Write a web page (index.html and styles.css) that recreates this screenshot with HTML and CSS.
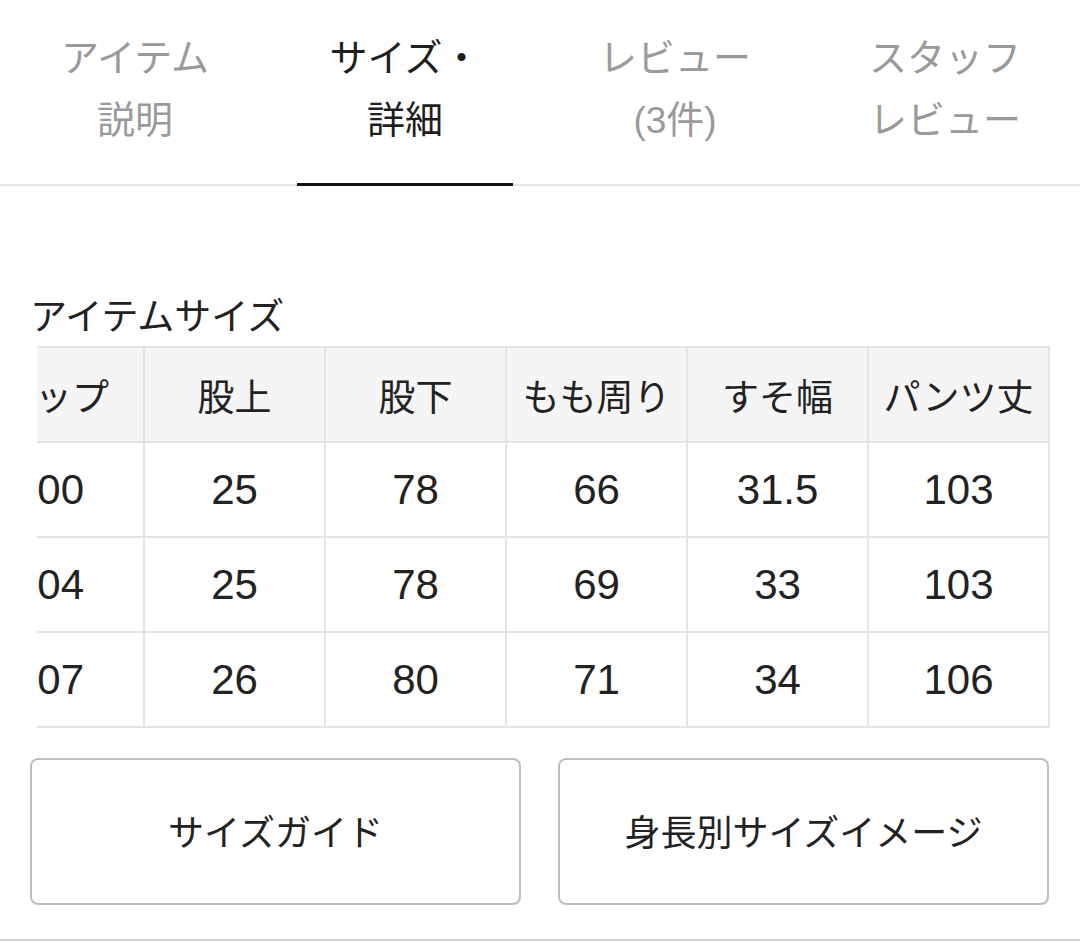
FILE: index.html
```html
<!DOCTYPE html>
<html lang="ja">
<head>
<meta charset="utf-8">
<title>アイテムサイズ</title>
<link rel="stylesheet" href="styles.css">
</head>
<body>
<nav class="tabs">
  <div class="tab">アイテム<br>説明</div>
  <div class="tab active">サイズ・<br>詳細</div>
  <div class="tab">レビュー<br><span class="num">(3</span>件<span class="num">)</span></div>
  <div class="tab">スタッフ<br>レビュー</div>
</nav>
<section class="content">
  <h2 class="heading">アイテムサイズ</h2>
  <div class="table-wrap">
    <table class="size-table">
      <thead>
        <tr><th>ヒップ</th><th>股上</th><th>股下</th><th>もも周り</th><th>すそ幅</th><th>パンツ丈</th></tr>
      </thead>
      <tbody>
        <tr><td>100</td><td>25</td><td>78</td><td>66</td><td>31.5</td><td>103</td></tr>
        <tr><td>104</td><td>25</td><td>78</td><td>69</td><td>33</td><td>103</td></tr>
        <tr><td>107</td><td>26</td><td>80</td><td>71</td><td>34</td><td>106</td></tr>
      </tbody>
    </table>
  </div>
  <div class="buttons">
    <button class="btn">サイズガイド</button>
    <button class="btn">身長別サイズイメージ</button>
  </div>
</section>
<div class="bottom-line"></div>
</body>
</html>
```

FILE: styles.css
```css
html, body {
  margin: 0;
  padding: 0;
  background: #fff;
}
body {
  width: 1080px;
  height: 943px;
  overflow: hidden;
  font-family: "Noto Sans CJK JP", "Noto Sans", sans-serif;
  color: #222;
}
.tabs {
  display: flex;
  border-bottom: 2px solid #e6e6e6;
  height: 186px;
  box-sizing: border-box;
}
.tab {
  flex: 1 1 0;
  position: relative;
  text-align: center;
  font-size: 38px;
  line-height: 62px;
  padding-top: 24px;
  color: #9a9a9a;
}
.tab .num {
  font-family: "Liberation Sans", "Noto Sans CJK JP", sans-serif;
  font-size: 37px;
}
.tab.active {
  color: #1e1e1e;
}
.tab.active::after {
  content: "";
  position: absolute;
  left: 10%;
  right: 10%;
  bottom: -2px;
  height: 3px;
  background: #111;
}
.content {
  padding: 0 30px;
}
.heading {
  margin: 101px 0 5px 0;
  font-size: 37px;
  font-weight: normal;
  line-height: 54px;
  color: #222;
}
.table-wrap {
  overflow: hidden;
  margin-left: 7px;
  width: 1014px;
}
.size-table {
  margin-left: -75px;
  border-collapse: collapse;
  table-layout: fixed;
}
.size-table th,
.size-table td {
  width: 179px;
  height: 93px;
  padding: 0;
  border: 2px solid #e4e4e4;
  text-align: center;
  color: #222;
  box-sizing: content-box;
}
.size-table th {
  background: #f5f5f5;
  font-size: 37px;
  font-weight: normal;
}
.size-table td {
  font-family: "Liberation Sans", "Noto Sans CJK JP", sans-serif;
  font-size: 42px;
  line-height: 50px;
}
.size-table td:first-child {
  width: 170px;
  padding-right: 9px;
}
.buttons {
  display: flex;
  gap: 37px;
  margin-top: 30px;
}
.btn {
  width: 491px;
  height: 147px;
  background: #fff;
  border: 2px solid #bdbdbd;
  border-radius: 8px;
  font-family: inherit;
  font-size: 36px;
  color: #222;
  padding: 0 0 4px;
}
.bottom-line {
  margin-top: 34px;
  height: 2px;
  background: #cfcfcf;
}
```
